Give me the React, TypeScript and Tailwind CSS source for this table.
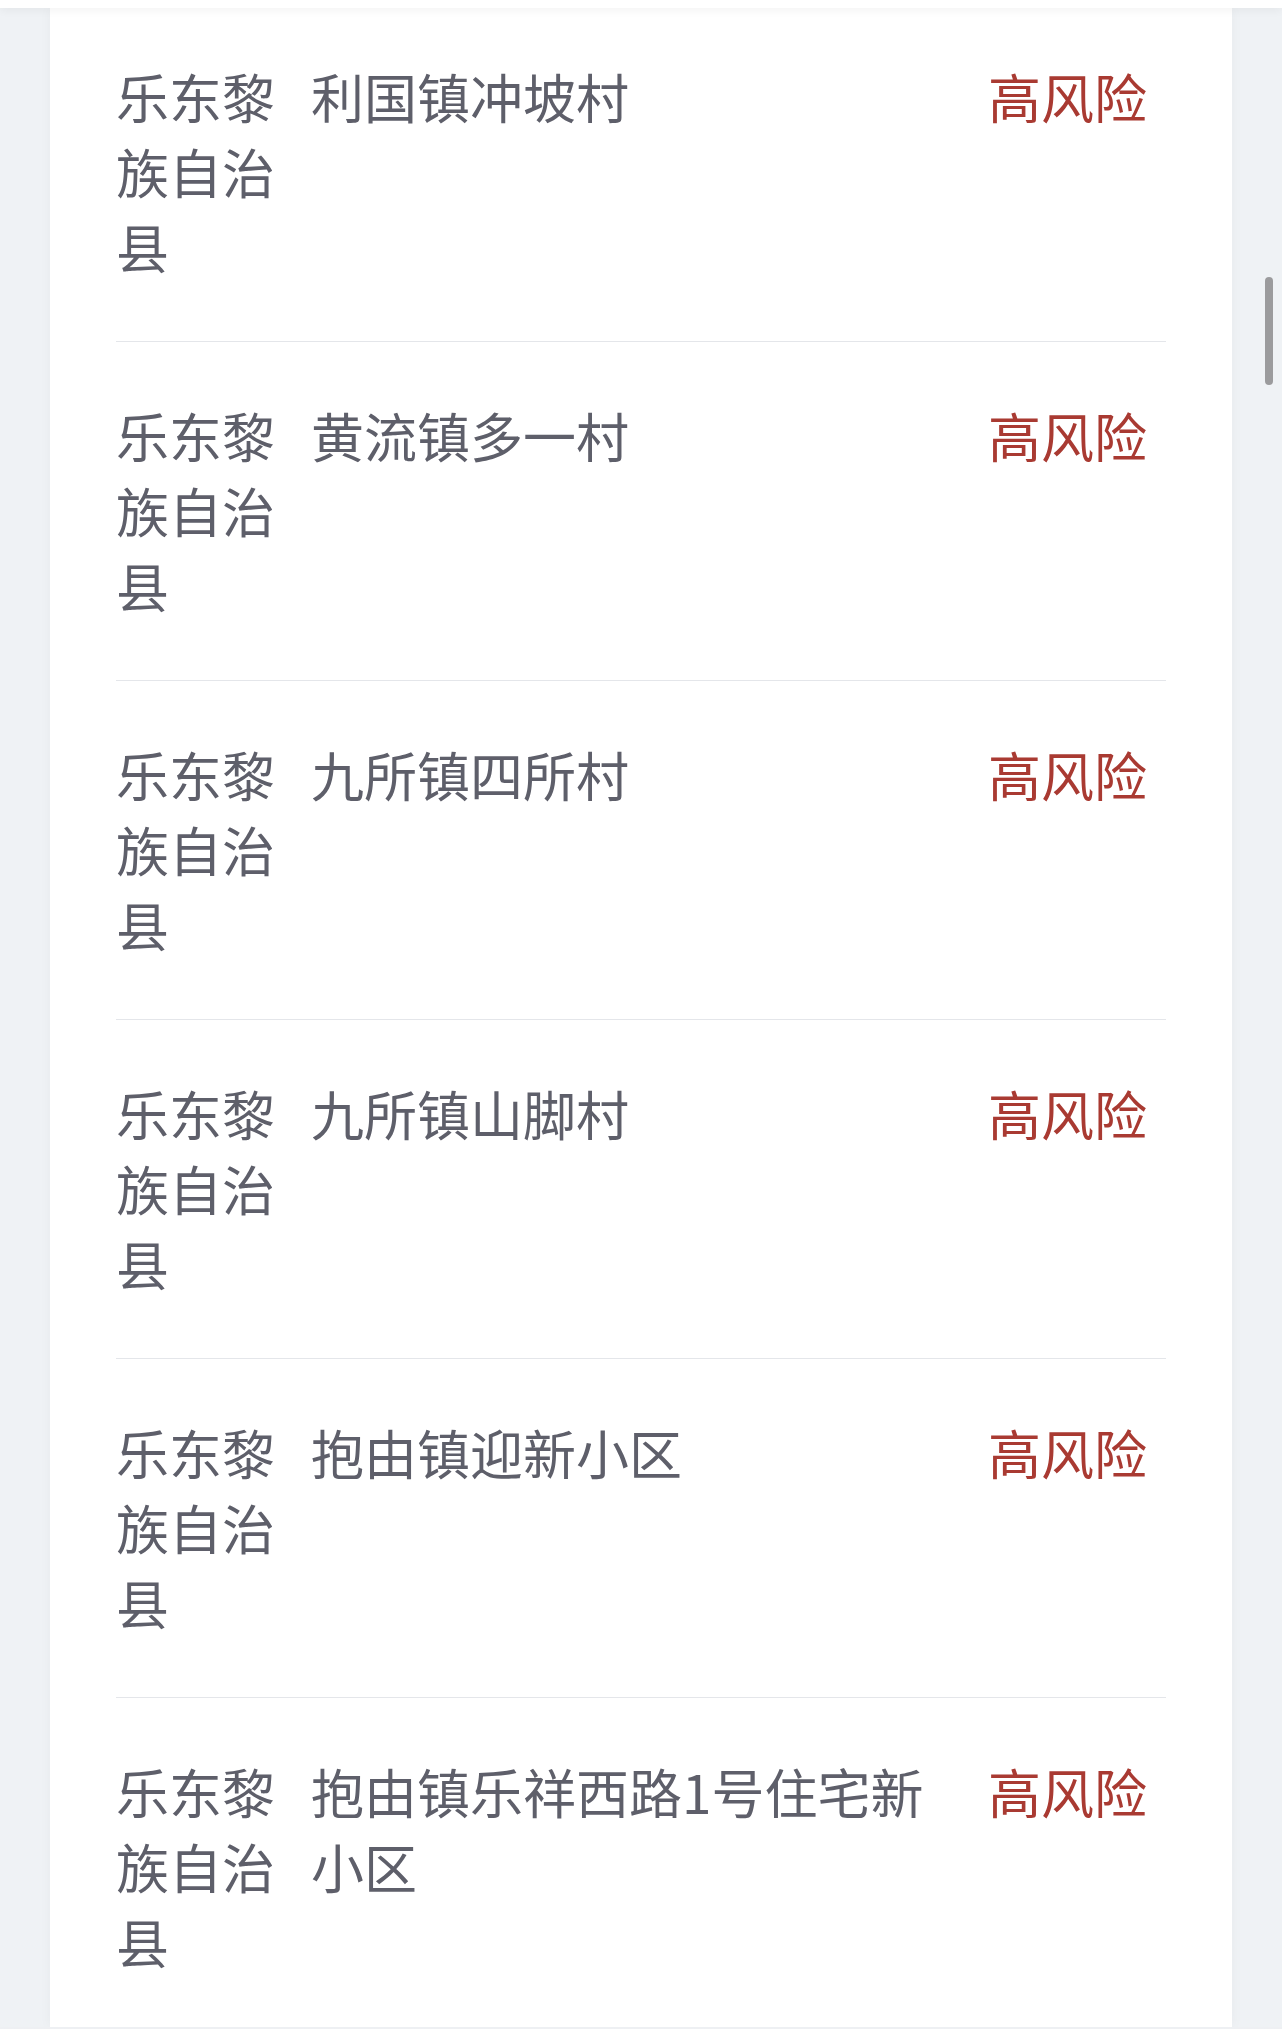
const ROWS = [
  { county: '乐东黎族自治县', place: '利国镇冲坡村', level: '高风险' },
  { county: '乐东黎族自治县', place: '黄流镇多一村', level: '高风险' },
  { county: '乐东黎族自治县', place: '九所镇四所村', level: '高风险' },
  { county: '乐东黎族自治县', place: '九所镇山脚村', level: '高风险' },
  { county: '乐东黎族自治县', place: '抱由镇迎新小区', level: '高风险' },
  { county: '乐东黎族自治县', place: '抱由镇乐祥西路1号住宅新小区', level: '高风险' },
];

function RiskRow({ county, place, level }: { county: string; place: string; level: string }) {
  return (
    <div className="grid grid-cols-[195px_640px_1fr] pt-[56px] pb-[57px] border-b border-[#e4e6ea] text-[53px] leading-[75px]">
      <div className="text-[#5e5f6a]">{county}</div>
      <div className="text-[#5e5f6a]">{place}</div>
      <div className="text-right pr-[19px] text-[#a93a32]">{level}</div>
    </div>
  );
}

export default function App() {
  return (
    <div
      className="relative h-[2044px] w-full overflow-hidden bg-[#eff2f5] flex flex-col"
      style={{ fontFamily: '"Noto Sans CJK SC", "Noto Sans", sans-serif' }}
    >
      {/* header bar, mostly scrolled away */}
      <div className="relative z-10 h-[8px] shrink-0 bg-white shadow-[0_2px_10px_rgba(0,0,0,0.06)]" />

      <div className="flex-1 min-h-0 px-[50px]">
        <div className="h-full overflow-hidden bg-white shadow-[0_0_12px_rgba(0,0,0,0.04)] px-[66px]">
          <div className="-mt-[5px]">
            {ROWS.map((r, i) => (
              <RiskRow key={i} {...r} />
            ))}
          </div>
        </div>
      </div>

      {/* bottom bar */}
      <div className="h-[17px] shrink-0 bg-white border-t-[2px] border-[#eef0f3]" />

      {/* overlay scrollbar */}
      <div className="absolute left-[1265px] top-[277px] w-[8px] h-[108px] rounded-full bg-[#9b9b9d]" />
    </div>
  );
}
